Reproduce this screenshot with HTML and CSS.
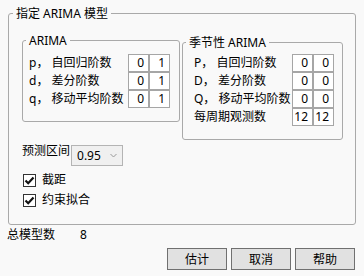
FILE: index.html
```html
<!DOCTYPE html>
<html lang="zh-CN">
<head>
  <meta charset="UTF-8" />
  <title>指定 ARIMA 模型</title>
  <link rel="stylesheet" href="styles.css">
</head>
<body>
  <fieldset class="group outer">
    <legend>指定 ARIMA 模型</legend>
    <div class="outer-body">
      <div class="models">
        <fieldset class="group sub arima">
          <legend>ARIMA</legend>
          <div class="sub-body">
            <div class="param-grid">
              <span class="param-label">p， 自回归阶数</span><span class="cell">0</span><span class="cell">1</span>
              <span class="param-label">d， 差分阶数</span><span class="cell">0</span><span class="cell">1</span>
              <span class="param-label">q， 移动平均阶数</span><span class="cell">0</span><span class="cell">1</span>
            </div>
          </div>
        </fieldset>
        <fieldset class="group sub seasonal">
          <legend>季节性 ARIMA</legend>
          <div class="sub-body">
            <div class="param-grid">
              <span class="param-label">P， 自回归阶数</span><span class="cell">0</span><span class="cell">0</span>
              <span class="param-label">D， 差分阶数</span><span class="cell">0</span><span class="cell">0</span>
              <span class="param-label">Q， 移动平均阶数</span><span class="cell">0</span><span class="cell">0</span>
              <span class="param-label">每周期观测数</span><span class="cell">12</span><span class="cell">12</span>
            </div>
          </div>
        </fieldset>
      </div>

      <div class="forecast">
        <span class="forecast-label">预测区间</span>
        <div class="select">
          <span>0.95</span>
          <svg class="chevron" width="7" height="5" viewBox="0 0 7 5"><path d="M0.5 1 L3.5 4 L6.5 1" fill="none" stroke="#999" stroke-width="1"/></svg>
        </div>
      </div>

      <div class="checks">
        <label class="check">
          <span class="box"><svg width="11" height="11" viewBox="0 0 11 11"><path d="M1.5 5.5 L4.2 8.2 L9.5 2.5" fill="none" stroke="#111" stroke-width="2.2"/></svg></span>
          截距
        </label>
        <label class="check">
          <span class="box"><svg width="11" height="11" viewBox="0 0 11 11"><path d="M1.5 5.5 L4.2 8.2 L9.5 2.5" fill="none" stroke="#111" stroke-width="2.2"/></svg></span>
          约束拟合
        </label>
      </div>
    </div>
  </fieldset>

  <div class="summary">
    <span class="summary-label">总模型数</span>
    <span>8</span>
  </div>

  <div class="actions">
    <button>估计</button>
    <button>取消</button>
    <button>帮助</button>
  </div>
</body>
</html>
```

FILE: styles.css
```css
body {
  margin: 0;
  padding: 6px 0 0 8px;
  background: #f9f9f9;
  color: #000;
  font-family: "Noto Sans", "Noto Sans CJK SC", sans-serif;
  font-size: 12px;
  line-height: 16px;
}

.group {
  margin: 0;
  padding: 0;
  min-width: 0;
  border: 1px solid #a9a9a9;
  border-radius: 3px;
}

.group legend {
  padding: 0 3px;
  margin-left: 3px;
  line-height: 15px;
}

.outer {
  width: 348px;
  box-sizing: border-box;
}

.outer > legend {
  margin-left: 4px;
}

.outer-body {
  padding: 12px 12px 14px 13px;
}

.models {
  display: flex;
  align-items: flex-start;
  gap: 2px;
}

.arima .sub-body {
  padding: 6px 9px 13px 6px;
}

.seasonal {
  margin-top: 2px;
}

.seasonal .sub-body {
  padding: 4px 8px 13px 11px;
}

.param-grid {
  display: grid;
  grid-template-columns: 99px 21px 21px;
  grid-auto-rows: 18px;
}

.seasonal .param-grid {
  grid-template-columns: 98px 21px 21px;
}

.param-label {
  white-space: nowrap;
  line-height: 18px;
}

.cell {
  box-sizing: border-box;
  border: 1px solid #a6a6a6;
  background: #fff;
  text-align: right;
  padding-right: 4px;
  line-height: 16px;
}

.forecast {
  display: flex;
  align-items: flex-start;
  gap: 1px;
  margin-top: 3px;
}

.select {
  display: flex;
  align-items: center;
  box-sizing: border-box;
  width: 52px;
  height: 21px;
  margin-top: 2px;
  padding: 0 5px;
  border: 1px solid #b4b4b4;
  background: #f0f0f0;
}

.chevron {
  margin-left: auto;
}

.checks {
  margin-top: 4px;
}

.check {
  display: flex;
  align-items: center;
  height: 20px;
  padding-left: 1px;
}

.box {
  display: flex;
  align-items: center;
  justify-content: center;
  box-sizing: border-box;
  width: 13px;
  height: 13px;
  margin-right: 6px;
  border: 1px solid #333;
  background: #fff;
}

.summary {
  display: flex;
  margin: 2px 0 0 -1px;
}

.summary-label {
  width: 73px;
}

.actions {
  display: flex;
  justify-content: flex-end;
  gap: 4px;
  margin-top: 5px;
  padding-right: 9px;
}

.actions button {
  box-sizing: border-box;
  width: 60px;
  height: 22px;
  padding: 0;
  border: 1px solid #707070;
  background: #e1e1e1;
  color: #000;
  font-family: inherit;
  font-size: 12px;
}
```
